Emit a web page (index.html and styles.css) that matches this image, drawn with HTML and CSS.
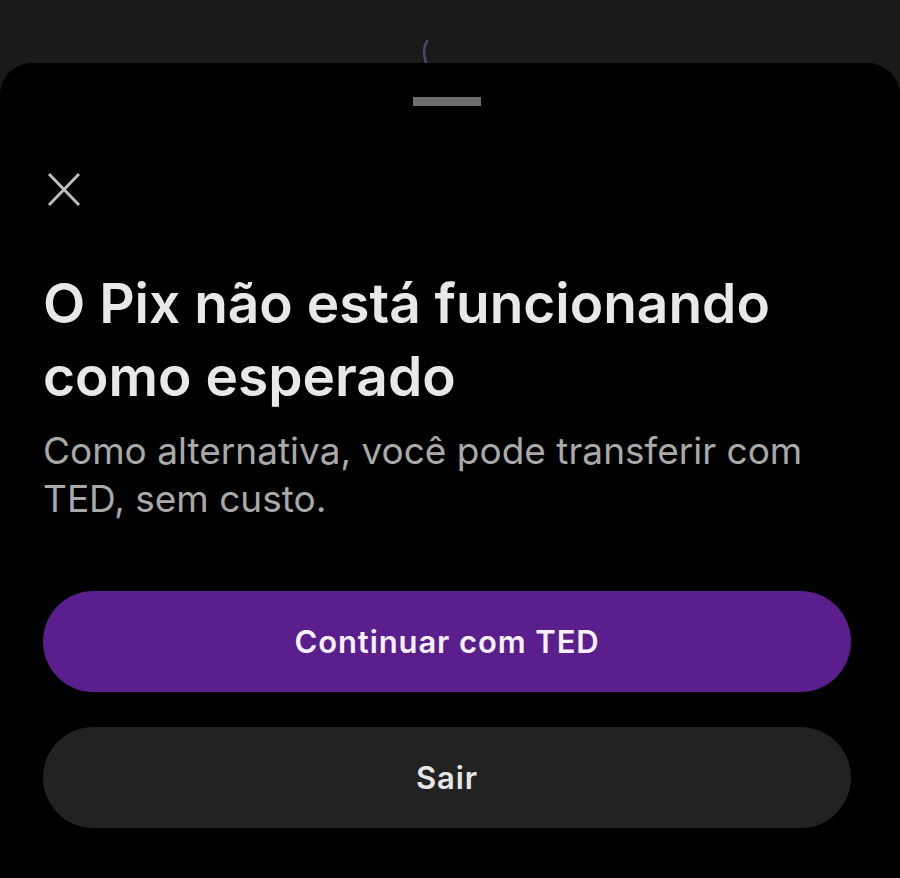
FILE: index.html
```html
<!DOCTYPE html>
<html lang="pt-BR">
<head>
<meta charset="utf-8">
<title>Pix</title>
<link rel="stylesheet" href="styles.css">
</head>
<body>
<div class="backdrop">
  <svg class="spinner" width="14" height="26" viewBox="0 0 14 26" aria-hidden="true">
    <path d="M8 1 Q2 11 8 25" fill="none" stroke="#4d4466" stroke-width="2.6" stroke-linecap="round"/>
  </svg>
</div>
<div class="sheet">
  <div class="handle"></div>
  <button class="close" aria-label="Fechar">
    <svg width="34" height="35" viewBox="0 0 34 35" aria-hidden="true">
      <path d="M2 2 L32 33 M32 2 L2 33" fill="none" stroke="#bdbdbd" stroke-width="3"/>
    </svg>
  </button>
  <h1 class="title">O Pix não está funcionando como esperado</h1>
  <p class="subtitle">Como alternativa, você pode transferir com TED, sem custo.</p>
  <div class="actions">
    <button class="btn btn-primary">Continuar com TED</button>
    <button class="btn btn-secondary">Sair</button>
  </div>
</div>
</body>
</html>
```

FILE: styles.css
```css
html, body {
  margin: 0;
  padding: 0;
  background: #1a1a1b;
  font-family: Inter, "Noto Sans", "Liberation Sans", sans-serif;
}

.backdrop {
  height: 63px;
  position: relative;
  overflow: hidden;
}

.spinner {
  position: absolute;
  left: 419px;
  top: 40px;
}

.sheet {
  background: #000;
  border-radius: 32px 32px 0 0;
  min-height: 815px;
  padding: 34px 49px 0 43px;
  box-sizing: border-box;
}

.handle {
  width: 68px;
  height: 9px;
  background: #6e6e6e;
  margin: 0 auto;
}

.close {
  display: block;
  margin: 66px 0 0 4px;
  padding: 0;
  border: 0;
  background: none;
  width: 34px;
  height: 35px;
}

.close svg {
  display: block;
}

.title {
  margin: 60px 0 0;
  font-size: 55px;
  line-height: 73px;
  font-weight: 600;
  color: #e8e8e8;
  letter-spacing: 0;
  max-width: 780px;
}

.subtitle {
  margin: 14px 0 0;
  font-size: 37px;
  line-height: 48px;
  font-weight: 400;
  color: #a9a9a9;
  max-width: 800px;
}

.actions {
  margin-top: 68px;
  display: flex;
  flex-direction: column;
  gap: 35px;
}

.btn {
  height: 101px;
  border: 0;
  border-radius: 51px;
  font-family: inherit;
  font-size: 31px;
  font-weight: 600;
  letter-spacing: 0.9px;
  width: 100%;
}

.btn-primary {
  background: #5a1f8c;
  color: #f6effc;
}

.btn-secondary {
  background: #222222;
  color: #e6e6e6;
}
```
